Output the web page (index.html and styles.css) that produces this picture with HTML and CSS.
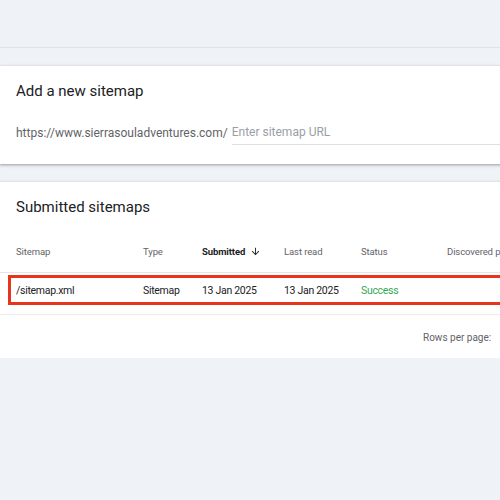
FILE: index.html
```html
<!DOCTYPE html>
<html>
<head>
<meta charset="utf-8">
<link rel="stylesheet" href="styles.css">
</head>
<body>
<div class="page">
  <div class="topbar"></div>
  <section class="card add-card">
    <h2 class="card-title">Add a new sitemap</h2>
    <div class="add-row">
      <span class="prefix">https://www.sierrasouladventures.com/</span>
      <span class="input">Enter sitemap URL</span>
    </div>
  </section>
  <section class="card list-card">
    <h2 class="card-title">Submitted sitemaps</h2>
    <div class="table">
      <div class="row head">
        <span>Sitemap</span>
        <span>Type</span>
        <span class="sorted">Submitted <svg class="arrow" viewBox="0 0 24 24" width="11" height="11"><path d="M20 12l-1.41-1.41L13 16.17V4h-2v12.17l-5.58-5.59L4 12l8 8 8-8z" fill="#202124"/></svg></span>
        <span>Last read</span>
        <span>Status</span>
        <span>Discovered pages</span>
      </div>
      <div class="row body">
        <span>/sitemap.xml</span>
        <span>Sitemap</span>
        <span>13 Jan 2025</span>
        <span>13 Jan 2025</span>
        <span class="ok">Success</span>
        <span></span>
        <div class="highlight"></div>
      </div>
    </div>
    <div class="footer">Rows per page:</div>
  </section>
</div>
</body>
</html>
```
FILE: styles.css
```css
html, body {
  margin: 0;
  padding: 0;
  background: #eff2f7;
  overflow: hidden;
}
.page {
  width: 640px;
  font-family: Roboto, "Liberation Sans", sans-serif;
  color: #202124;
}
.topbar {
  height: 47px;
  border-bottom: 1px solid #dfe3e8;
}
.card {
  background: #fff;
  box-shadow: 0 1px 2px rgba(60,64,67,.3), 0 1px 3px 1px rgba(60,64,67,.15);
}
.add-card {
  margin-top: 18px;
  height: 98px;
  padding: 0 0 0 16px;
  box-sizing: border-box;
  overflow: hidden;
}
.card-title {
  margin: 0;
  font-weight: 400;
  font-size: 15px;
  line-height: 20px;
  padding-top: 15px;
}
.add-row {
  display: flex;
  align-items: flex-end;
  margin-top: 22px;
}
.prefix {
  font-size: 12px;
  color: #5f6368;
  line-height: 18px;
  padding-bottom: 3px;
}
.input {
  margin-left: 4px;
  flex: 1;
  font-size: 12px;
  color: #9aa0a6;
  line-height: 18px;
  padding-bottom: 3px;
  border-bottom: 1px solid #e0e0e0;
}
.list-card {
  margin-top: 18px;
  height: 176px;
  box-sizing: border-box;
  overflow: hidden;
}
.list-card .card-title {
  padding-left: 16px;
  padding-top: 15px;
}
.table {
  margin-top: 13px;
}
.row {
  display: grid;
  grid-template-columns: 127px 59px 82px 77px 86px 1fr;
  padding-left: 16px;
  position: relative;
}
.row.head {
  height: 43px;
  align-items: center;
  font-size: 9.5px;
  letter-spacing: -0.1px;
  color: #5f6368;
  border-bottom: 1px solid #e6e6e6;
  box-sizing: border-box;
}
.row.head span { white-space: nowrap; }
.sorted {
  color: #202124;
  font-weight: 700;
  display: flex;
  align-items: center;
  gap: 5px;
}
.row.body {
  height: 42px;
  align-items: start;
  padding-top: 11px;
  font-size: 10.5px;
  line-height: 14px;
  letter-spacing: -0.3px;
  border-bottom: 1px solid #ececec;
  box-sizing: border-box;
}
.ok { color: #34a853; }
.highlight {
  position: absolute;
  left: 8px;
  top: 2px;
  right: 0;
  height: 30px;
  border: 3px solid #e8341c;
  box-sizing: border-box;
  pointer-events: none;
}
.footer {
  height: 43px;
  display: flex;
  align-items: center;
  padding-left: 423px;
  padding-top: 2px;
  box-sizing: border-box;
  font-size: 10px;
  color: #5f6368;
}
```
